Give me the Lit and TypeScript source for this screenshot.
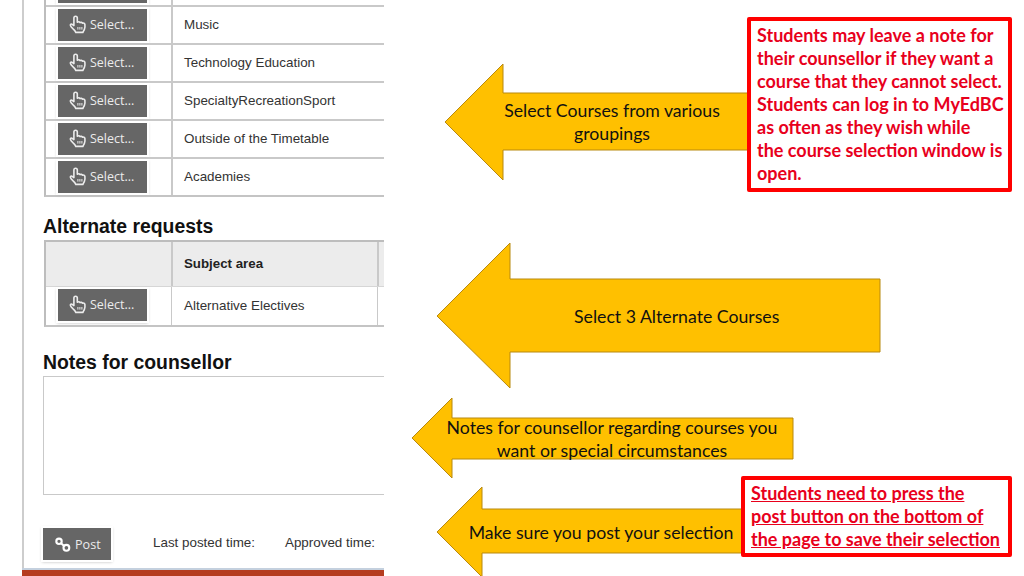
import { LitElement, html, css, svg } from "lit";
import { customElement } from "lit/decorators.js";

const hand = svg`<path d="M6.6 1.2c1 0 1.7.7 1.7 1.7v4.3c1-.6 2.2-.4 2.7.4.9-.5 2-.3 2.5.6 1-.4 2.2.1 2.4 1.2.2 1.6.1 3.1-.4 4.5-.4 1.3-1.2 2.3-1.6 3.5H6.8c-.4-1.3-1.4-2.4-2.7-3.5-1.1-1-2.5-2.4-2.7-3.5-.2-1 .9-1.7 1.8-1.1l1.7 1.3V2.9c0-1 .7-1.7 1.7-1.7z" fill="none" stroke="currentColor" stroke-width="1.6" stroke-linejoin="round"/><path d="M8.9 12v2.6M10.9 12v2.6M12.9 12v2.6" stroke="currentColor" stroke-width="1" fill="none"/>`;

const chain = svg`<g fill="none" stroke="#fff" stroke-width="2.1"><circle cx="4" cy="4.3" r="2.7"/><circle cx="11.4" cy="10.8" r="2.9"/><path d="M6 6.2l3.2 2.8"/></g>`;

const arrows = [
  { tip: [445, 122], headX: 503, headTop: 64, headBottom: 180, top: 93, bottom: 150, right: 760 },
  { tip: [437, 316], headX: 510, headTop: 243, headBottom: 388, top: 279, bottom: 352, right: 880 },
  { tip: [412, 438], headX: 452, headTop: 398, headBottom: 478, top: 418, bottom: 459, right: 793 },
  { tip: [437, 532], headX: 482, headTop: 487, headBottom: 577, top: 509, bottom: 553, right: 760 },
];

const labels = [
  { cls: "l1", lines: ["Select Courses from various", "groupings"] },
  { cls: "l2", lines: ["Select 3 Alternate Courses"] },
  { cls: "l3", lines: ["Notes for counsellor regarding courses you", "want or special circumstances"] },
  { cls: "l4", lines: ["Make sure you post your selection"] },
];

const subjects = ["Music", "Technology Education", "SpecialtyRecreationSport", "Outside of the Timetable", "Academies"];

@customElement("app-root")
export class AppRoot extends LitElement {
  static styles = css`
    :host { display: flex; width: 1024px; height: 576px; overflow: hidden; background: #fff; font-family: "Liberation Sans", Arial, sans-serif; }
    .panel { margin-left: 22px; width: 362px; height: 576px; flex: none; overflow: hidden; box-sizing: border-box; box-shadow: inset 2px 0 0 #cdcdcd; position: relative; display: flex; flex-direction: column; padding-left: 22px; }
    .inner { width: 400px; margin-top: -33px; display: flex; flex-direction: column; }
    .table { border-left: 2px solid #bdbdbd; border-bottom: 2px solid #c4c4c4; width: 400px; box-sizing: border-box; }
    .row { display: grid; grid-template-columns: 125px 206px 1fr; height: 38px; box-sizing: border-box; border-top: 2px solid #c9c9c9; }
    .row > div { display: flex; align-items: center; box-sizing: border-box; color: #333; font-size: 13.4px; }
    .row > div + div { border-left: 2px solid #c9c9c9; padding-left: 11px; padding-bottom: 1px; }
    .row > div:nth-child(3) { border-left: none; }
    .row > div:first-child { padding-left: 12px; }
    .t2 { border-top: 1px solid #bdbdbd; }
    .t2 .row > div:nth-child(3) { border-left: 2px solid #c9c9c9; }
    .t2 .head { height: 45px; background: #ececec; border-top: 1px solid #bdbdbd; }
    .t2 .head > div { font-weight: 700; color: #222; font-size: 13.3px; }
    .t2 .body { border-top: 1px solid #d6d6d6; height: 39px; }
    .t2 .body > div + div { border-left-width: 1px; padding-left: 12px; }
    .t2 .body > div:nth-child(3) { border-left-width: 1px; }
    .t2 .body .btn { margin-bottom: 2px; }
    .btn { width: 89px; height: 32px; box-sizing: border-box; background: #666; color: #ececec; display: flex; align-items: center; padding-left: 11px; gap: 3px; font-family: "Open Sans", sans-serif; font-size: 12.5px; box-shadow: 0 0 0 2px #fff, 0 1px 3px 1px #bbb; }
    .btn svg { width: 18px; height: 20px; flex: none; margin-bottom: 1px; }
    .btn span { margin-bottom: 2px; }
    h2 { margin: 0 0 0 -1px; font-size: 19.4px; line-height: 24px; font-weight: 700; color: #111; }
    .alt { margin-top: 17px; margin-bottom: 2px; }
    .notes { margin-top: 23px; margin-bottom: 2px; }
    .box { height: 119px; width: 400px; margin-left: -1px; box-sizing: border-box; border: 1px solid #c9c9c9; }
    .foot { display: flex; align-items: center; margin-top: 33px; margin-left: -1px; height: 32px; color: #333; font-size: 13.4px; }
    .post { width: 68px; height: 32px; box-sizing: border-box; background: #666; color: #ececec; display: flex; align-items: center; padding-left: 12px; gap: 4px; font-family: "Open Sans", sans-serif; font-size: 12.6px; box-shadow: 0 0 0 2px #fff, 0 1px 3px 1px #bbb; }
    .post svg { width: 16px; height: 15px; flex: none; }
    .last { margin-left: 42px; margin-bottom: 4px; }
    .appr { margin-left: 30px; margin-bottom: 4px; }
    .bar { position: absolute; left: 0; right: 0; top: 568px; height: 8px; border-top: 2px solid #c4d0de; box-sizing: border-box; background: #b53c1f; }

    .canvas { flex: 1; position: relative; height: 576px; font-family: Lato, sans-serif; }
    .shapes { position: absolute; inset: 0; width: 640px; height: 576px; }
    .label { position: absolute; color: #111; font-size: 17.7px; line-height: 23px; text-align: center; white-space: nowrap; }
    .l1 { left: 118px; top: 99px; width: 220px; }
    .l2 { left: 190px; top: 305px; width: 205px; }
    .l3 { left: 59px; top: 416px; width: 338px; }
    .l4 { left: 84px; top: 521px; width: 266px; }
    .note { position: absolute; box-sizing: border-box; border: 4px solid #f00; border-radius: 2px; background: #fff; color: #e8001c; font-weight: 700; font-size: 18px; line-height: 23px; white-space: nowrap; }
    .n1 { left: 363px; top: 17px; width: 265px; height: 175px; padding: 3px 0 0 6px; }
    .n2 { left: 357px; top: 476px; width: 271px; height: 81px; padding: 2px 0 0 6px; text-decoration: underline; }
  `;

  private selectBtn() {
    return html`<div class="btn"><svg viewBox="0 0 18 20">${hand}</svg><span>Select...</span></div>`;
  }

  render() {
    return html`
      <div class="panel">
        <div class="inner">
          <div class="table">
            <div class="row"><div><div class="btn"></div></div><div></div><div></div></div>
            ${subjects.map((s) => html`<div class="row"><div>${this.selectBtn()}</div><div>${s}</div><div></div></div>`)}
          </div>
          <h2 class="alt">Alternate requests</h2>
          <div class="table t2">
            <div class="row head"><div></div><div>Subject area</div><div></div></div>
            <div class="row body"><div>${this.selectBtn()}</div><div>Alternative Electives</div><div></div></div>
          </div>
          <h2 class="notes">Notes for counsellor</h2>
          <div class="box"></div>
          <div class="foot">
            <div class="post"><svg viewBox="0 0 16 15">${chain}</svg><span>Post</span></div>
            <span class="last">Last posted time:</span>
            <span class="appr">Approved time:</span>
          </div>
        </div>
        <div class="bar"></div>
      </div>
      <div class="canvas">
        <svg class="shapes" viewBox="384 0 640 576">
          ${arrows.map((a) => svg`<path fill="#ffc000" stroke="#b8890f" stroke-width="1"
            d="M${a.tip[0]} ${a.tip[1]}L${a.headX} ${a.headTop}V${a.top}H${a.right}V${a.bottom}H${a.headX}V${a.headBottom}Z"/>`)}
        </svg>
        ${labels.map((l) => html`<div class="label ${l.cls}">${l.lines.map((t) => html`<div>${t}</div>`)}</div>`)}
        <div class="note n1">Students may leave a note for<br />their counsellor if they want a<br />course that they cannot select.<br />Students can log in to MyEdBC<br />as often as they wish while<br />the course selection window is<br />open.</div>
        <div class="note n2">Students need to press the<br />post button on the bottom of<br />the page to save their selection</div>
      </div>
    `;
  }
}
